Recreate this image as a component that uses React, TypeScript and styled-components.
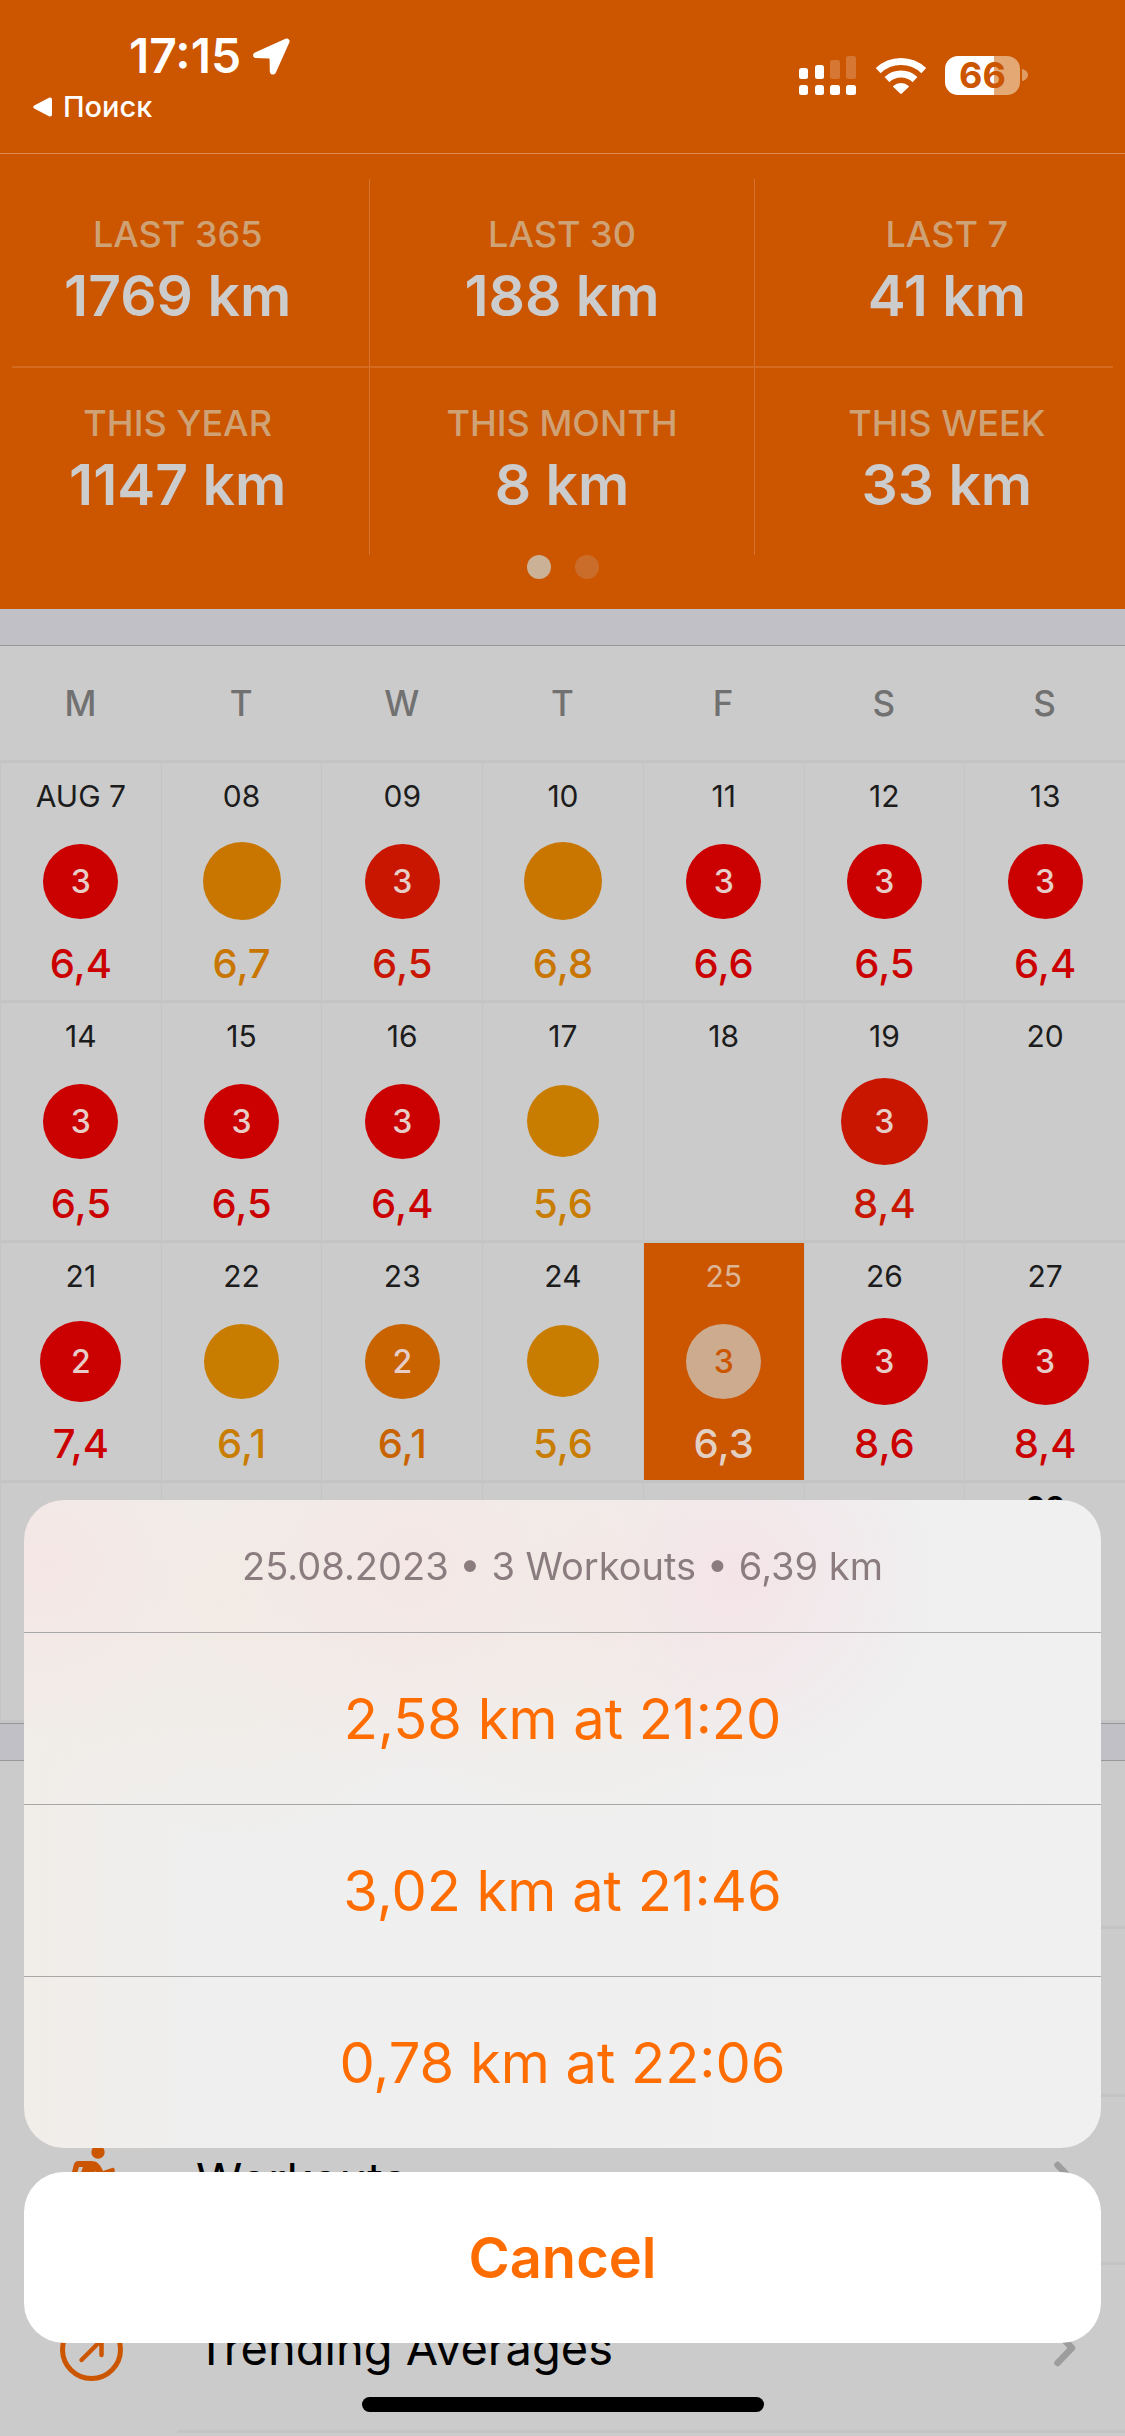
import React from "react";
import styled, { createGlobalStyle } from "styled-components";

const color = {
  orange: "#cc5500",
  accent: "#ff6d00",
  page: "#cbcbcb",
  band: "#c1c0c6",
  bandLine: "#98979c",
  grid: "#c4c4c5",
};

const GlobalStyle = createGlobalStyle`
  * { box-sizing: border-box; }
  body {
    margin: 0;
    background: ${color.page};
    font-family: Inter, "Noto Sans", "Liberation Sans", sans-serif;
  }
  button {
    font: inherit;
    color: inherit;
    border: 0;
    margin: 0;
    padding: 0;
    background: none;
    cursor: pointer;
  }
`;

const Screen = styled.div`
  display: flex;
  flex-direction: column;
  height: 100vh;
  overflow: hidden;
`;

/* ---------- status bar ---------- */

const StatusBar = styled.header`
  display: flex;
  flex: none;
  justify-content: space-between;
  height: 154px;
  padding: 28px 97px 0 33px;
  color: #fff;
  background: ${color.orange};
  border-bottom: 1px solid #dd8a50;
`;

const StatusLeft = styled.div`
  display: flex;
  flex-direction: column;
  gap: 5px;
`;

const Clock = styled.div`
  display: flex;
  align-items: center;
  gap: 12px;
  padding-left: 96px;
  font-size: 48px;
  font-weight: 600;
  line-height: 56px;
`;

const BackLink = styled.a`
  display: flex;
  align-items: center;
  gap: 11px;
  color: inherit;
  font-size: 29px;
  font-weight: 500;
  line-height: 36px;
  text-decoration: none;
`;

const StatusIcons = styled.div`
  display: flex;
  align-items: center;
  gap: 18px;
  height: 94px;
`;

const Battery = styled.div`
  display: flex;
  align-items: center;
  gap: 2px;
`;

const BatteryBody = styled.div`
  width: 75px;
  height: 39px;
  border-radius: 13px;
  background: linear-gradient(90deg, #fff 66%, #e3a873 66%);
  color: ${color.orange};
  font-size: 36px;
  font-weight: 700;
  line-height: 39px;
  text-align: center;
`;

/* ---------- totals ---------- */

const Totals = styled.section`
  flex: none;
  padding: 25px 0 30px;
  overflow: hidden;
  background: ${color.orange};
`;

const TotalsRow = styled.div`
  display: grid;
  grid-template-columns: repeat(3, 1fr);
  margin: 0 -14px;
`;

const TotalsDivider = styled.hr`
  height: 2px;
  margin: 0 12px;
  border: 0;
  background: #d46920;
`;

const Total = styled.div`
  display: flex;
  flex-direction: column;
  gap: 6px;
  height: 187px;
  padding-top: 33px;
  text-align: center;
  border-right: 1px solid #d77334;

  &:last-child {
    border-right: 0;
  }
`;

const TotalLabel = styled.div`
  color: #cfa276;
  font-size: 36px;
  font-weight: 500;
  line-height: 44px;
`;

const TotalValue = styled.div`
  color: #cccccc;
  font-size: 57px;
  font-weight: 600;
  line-height: 68px;
`;

const Pager = styled.div`
  display: flex;
  justify-content: center;
  gap: 24px;
`;

const PagerDot = styled.button<{ $active?: boolean }>`
  width: 24px;
  height: 24px;
  border-radius: 50%;
  background: ${(p) => (p.$active ? "#cbb195" : "#cb6d2a")};
`;

const Band = styled.div`
  flex: none;
  height: 37px;
  background: ${color.band};
  border-bottom: 1px solid ${color.bandLine};
`;

const LowerBand = styled(Band)`
  height: 38px;
  border-top: 1px solid ${color.bandLine};
`;

/* ---------- calendar ---------- */

const Calendar = styled.table`
  flex: none;
  width: 100%;
  table-layout: fixed;
  border-spacing: 0;
  border-bottom: 3px solid ${color.grid};
`;

const Weekday = styled.th`
  height: 114px;
  padding: 0;
  color: #717171;
  font-size: 35px;
  font-weight: 500;
`;

const DayCell = styled.td<{ $selected?: boolean }>`
  height: 240px;
  padding: 0;
  vertical-align: top;
  border-top: 3px solid ${color.grid};
  border-left: 1px solid ${color.grid};
  background: ${(p) => (p.$selected ? color.orange : "transparent")};
  background-clip: padding-box;
`;

const DayButton = styled.button<{ $today?: boolean }>`
  display: flex;
  flex-direction: column;
  align-items: center;
  width: 100%;
  height: 237px;
  padding-top: ${(p) => (p.$today ? 6 : 15)}px;
  font-weight: ${(p) => (p.$today ? 700 : 400)};
`;

const DayDate = styled.span<{ $color: string }>`
  margin-bottom: 22px;
  color: ${(p) => p.$color};
  font-size: 30px;
  line-height: 36px;
`;

const DotArea = styled.span`
  display: flex;
  align-items: center;
  justify-content: center;
  height: 90px;
  margin-bottom: 14px;
`;

const Dot = styled.span<{ $size: number; $fill: string; $text: string }>`
  display: flex;
  align-items: center;
  justify-content: center;
  width: ${(p) => p.$size}px;
  height: ${(p) => p.$size}px;
  border-radius: 50%;
  background: ${(p) => p.$fill};
  color: ${(p) => p.$text};
  font-size: 32px;
  font-weight: 500;
`;

const DayDistance = styled.span<{ $color: string }>`
  color: ${(p) => p.$color};
  font-size: 40px;
  font-weight: 500;
  line-height: 48px;
`;

/* ---------- menu ---------- */

const Menu = styled.nav`
  flex: 1;
`;

const MenuRow = styled.a`
  display: flex;
  align-items: center;
  height: 168px;
  padding-left: 60px;
  color: #000;
  text-decoration: none;
`;

const MenuIcon = styled.span`
  display: flex;
  width: 117px;
`;

const MenuBody = styled.span`
  display: flex;
  flex: 1;
  align-items: center;
  justify-content: space-between;
  height: 168px;
  padding: 0 48px 0 19px;
  border-bottom: 3px solid ${color.grid};
  font-size: 47px;
  font-weight: 400;
`;

/* ---------- action sheet ---------- */

const Overlay = styled.div`
  position: fixed;
  inset: 0;
  display: flex;
  flex-direction: column;
  justify-content: flex-end;
  padding: 0 24px 24px;
`;

const Sheet = styled.div`
  overflow: hidden;
  margin-bottom: 24px;
  border-radius: 40px;
  background:
    radial-gradient(circle at 2% 10%, #f4e6e5 0, #f4e6e500 170px),
    radial-gradient(circle at 36% 10%, #f4e7e5 0, #f4e7e500 220px),
    radial-gradient(circle at 66% 12%, #f4e4e8 0, #f4e4e800 200px),
    radial-gradient(circle at 19% 14%, #f2ebe4 0, #f2ebe400 260px),
    radial-gradient(circle at 51% 14%, #f2ebe5 0, #f2ebe500 240px),
    linear-gradient(90deg, #f1ede9 0, #efefef 16%, #f0f0f0 100%);
`;

const SheetTitle = styled.h2`
  margin: 0;
  color: #8b7d7f;
  font-size: 38px;
  font-weight: 400;
  line-height: 132px;
  text-align: center;
`;

const SheetAction = styled.button`
  display: block;
  width: 100%;
  height: 172px;
  border-top: 1px solid #a8a6a6;
  color: ${color.accent};
  font-size: 56px;
`;

const CancelButton = styled.button`
  flex: none;
  height: 171px;
  margin-bottom: 54px;
  border-radius: 40px;
  background: #fff;
  color: ${color.accent};
  font-size: 56px;
  font-weight: 600;
`;

const HomeIndicator = styled.div`
  align-self: center;
  width: 402px;
  height: 15px;
  border-radius: 8px;
  background: #000;
`;

/* ---------- data ---------- */

const totals = [
  [
    ["LAST 365", "1769 km"],
    ["LAST 30", "188 km"],
    ["LAST 7", "41 km"],
  ],
  [
    ["THIS YEAR", "1147 km"],
    ["THIS MONTH", "8 km"],
    ["THIS WEEK", "33 km"],
  ],
];

const weekdays = ["M", "T", "W", "T", "F", "S", "S"];

const red = "#cb0000";
const vermilion = "#c91600";
const burnt = "#c86300";
const ochre = "#c97600";
const amber = "#c97d00";

type Day = {
  date?: string;
  count?: string;
  size?: number;
  fill?: string;
  km?: string;
  selected?: boolean;
  today?: boolean;
};

const weeks: Day[][] = [
  [
    { date: "AUG 7", count: "3", size: 75, fill: red, km: "6,4" },
    { date: "08", size: 78, fill: ochre, km: "6,7" },
    { date: "09", count: "3", size: 75, fill: vermilion, km: "6,5" },
    { date: "10", size: 78, fill: ochre, km: "6,8" },
    { date: "11", count: "3", size: 75, fill: red, km: "6,6" },
    { date: "12", count: "3", size: 75, fill: red, km: "6,5" },
    { date: "13", count: "3", size: 75, fill: red, km: "6,4" },
  ],
  [
    { date: "14", count: "3", size: 75, fill: red, km: "6,5" },
    { date: "15", count: "3", size: 75, fill: red, km: "6,5" },
    { date: "16", count: "3", size: 75, fill: red, km: "6,4" },
    { date: "17", size: 72, fill: amber, km: "5,6" },
    { date: "18" },
    { date: "19", count: "3", size: 87, fill: vermilion, km: "8,4" },
    { date: "20" },
  ],
  [
    { date: "21", count: "2", size: 81, fill: red, km: "7,4" },
    { date: "22", size: 75, fill: amber, km: "6,1" },
    { date: "23", count: "2", size: 75, fill: burnt, km: "6,1" },
    { date: "24", size: 72, fill: amber, km: "5,6" },
    { date: "25", count: "3", size: 75, fill: "#ccab8f", km: "6,3", selected: true },
    { date: "26", count: "3", size: 87, fill: red, km: "8,6" },
    { date: "27", count: "3", size: 87, fill: red, km: "8,4" },
  ],
  [{}, {}, {}, {}, {}, {}, { date: "03", today: true }],
];

const workouts = ["2,58 km at 21:20", "3,02 km at 21:46", "0,78 km at 22:06"];

/* ---------- icons ---------- */

const LocationArrow = () => (
  <svg width="37" height="37" viewBox="0 0 37 37" fill="#fff" aria-hidden="true">
    <path d="M32.500.8 2 14.400C-1 15.800-.4 20 3 20.100l12.600.3c.6 0 1 .4 1 1l.2 12c.1 3.600 4.600 4.300 6.100 1L36.300 4.600C37.500 2 35 -.3 32.500.8Z" />
  </svg>
);

const BackTriangle = () => (
  <svg width="19" height="20" viewBox="0 0 19 20" fill="#fff" aria-hidden="true">
    <path d="M1.200 8.600 16 .8c1.600-.8 3 .1 3 1.700v15c0 1.600-1.400 2.500-3 1.700L1.200 11.400c-1.300-.7-1.300-2.100 0-2.800Z" />
  </svg>
);

const Signal = () => (
  <svg width="58" height="39" viewBox="0 0 58 39" fill="#fff" aria-hidden="true">
    <rect x="0" y="12" width="9" height="11" rx="2.500" />
    <rect x="16" y="9" width="9" height="14" rx="2.500" />
    <rect x="31" y="4" width="10" height="19" rx="2.500" opacity=".2" />
    <rect x="47" y="0" width="10" height="23" rx="2.500" opacity=".2" />
    <rect x="0" y="29" width="9" height="10" rx="2.500" />
    <rect x="16" y="29" width="9" height="10" rx="2.500" />
    <rect x="31" y="29" width="10" height="10" rx="2.500" />
    <rect x="47" y="29" width="10" height="10" rx="2.500" />
  </svg>
);

const Wifi = () => (
  <svg width="52" height="37" viewBox="0 0 52 37" aria-hidden="true">
    <g fill="none" stroke="#fff" strokeWidth="7">
      <path d="M3.200 13.600a33 33 0 0 1 45.600 0" />
      <path d="M12 22.600a20.500 20.500 0 0 1 28 0" />
    </g>
    <path fill="#fff" d="M18.300 28.900a11.600 11.600 0 0 1 15.400 0c.4.4.4.8 0 1.200l-6.900 6.400c-.5.500-1.100.5-1.600 0l-6.900-6.400c-.4-.4-.4-.8 0-1.200Z" />
  </svg>
);

const BatteryTip = () => (
  <svg width="6" height="12" viewBox="0 0 6 12" fill="#df9b64" aria-hidden="true">
    <path d="M0 0c3.500.8 6 3 6 6s-2.500 5.200-6 6Z" />
  </svg>
);

const Runner = () => (
  <svg width="63" height="70" viewBox="0 0 63 70" aria-hidden="true">
    <circle cx="38" cy="6" r="6.700" fill={color.orange} />
    <path
      fill={color.orange}
      d="M18 15h13c6 0 9 3 12 10l9-3c3-1 4 4 1 5l-13 4-5-6-5 14 10 9-3 17c-1 4-7 3-6-1l2-13-13-9c-3-2-3-4-2-7l5-14h-4l-3 10c-1 3-6 2-5-1l3-12c1-2 2-3 4-3Z"
    />
  </svg>
);

const Trend = () => (
  <svg width="63" height="63" viewBox="0 0 63 63" fill="none" stroke={color.orange} strokeWidth="5" aria-hidden="true">
    <circle cx="31.500" cy="31.500" r="29" />
    <path d="M21.500 42 41 22.500M27 22h14.500v15" strokeWidth="4.500" strokeLinecap="round" strokeLinejoin="round" />
  </svg>
);

const Chevron = () => (
  <svg width="24" height="38" viewBox="0 0 24 38" fill="none" stroke="#9d9d9d" strokeWidth="6.500" strokeLinecap="round" strokeLinejoin="round" aria-hidden="true">
    <path d="M4.500 4 19 19 4.500 34" />
  </svg>
);

/* ---------- app ---------- */

function DayView({ day }: { day: Day }) {
  const dateColor = day.selected ? "#dcb597" : day.today ? "#000" : "#1c1c1c";
  return (
    <DayCell $selected={day.selected}>
      {day.date && (
        <DayButton type="button" $today={day.today}>
          <DayDate $color={dateColor}>{day.date}</DayDate>
          {day.km && day.size && day.fill && (
            <>
              <DotArea>
                <Dot $size={day.size} $fill={day.fill} $text={day.selected ? color.orange : "#e6cdc8"}>
                  {day.count}
                </Dot>
              </DotArea>
              <DayDistance $color={day.selected ? "#e2d0c4" : day.fill}>{day.km}</DayDistance>
            </>
          )}
        </DayButton>
      )}
    </DayCell>
  );
}

export default function App() {
  return (
    <>
      <GlobalStyle />
      <Screen>
        <StatusBar>
          <StatusLeft>
            <Clock>
              17:15
              <LocationArrow />
            </Clock>
            <BackLink href="#">
              <BackTriangle />
              Поиск
            </BackLink>
          </StatusLeft>
          <StatusIcons>
            <Signal />
            <Wifi />
            <Battery>
              <BatteryBody>66</BatteryBody>
              <BatteryTip />
            </Battery>
          </StatusIcons>
        </StatusBar>

        <Totals>
          {totals.map((row, i) => (
            <React.Fragment key={i}>
              {i > 0 && <TotalsDivider />}
              <TotalsRow>
                {row.map(([label, value]) => (
                  <Total key={label}>
                    <TotalLabel>{label}</TotalLabel>
                    <TotalValue>{value}</TotalValue>
                  </Total>
                ))}
              </TotalsRow>
            </React.Fragment>
          ))}
          <Pager>
            <PagerDot type="button" aria-label="Page 1" $active />
            <PagerDot type="button" aria-label="Page 2" />
          </Pager>
        </Totals>
        <Band />

        <Calendar>
          <thead>
            <tr>
              {weekdays.map((name, i) => (
                <Weekday key={i} scope="col">
                  {name}
                </Weekday>
              ))}
            </tr>
          </thead>
          <tbody>
            {weeks.map((week, w) => (
              <tr key={w}>
                {week.map((day, d) => (
                  <DayView key={d} day={day} />
                ))}
              </tr>
            ))}
          </tbody>
        </Calendar>
        <LowerBand />

        <Menu>
          <MenuRow as="div">
            <MenuIcon />
            <MenuBody />
          </MenuRow>
          <MenuRow as="div">
            <MenuIcon />
            <MenuBody />
          </MenuRow>
          <MenuRow href="#">
            <MenuIcon>
              <Runner />
            </MenuIcon>
            <MenuBody>
              Workouts
              <Chevron />
            </MenuBody>
          </MenuRow>
          <MenuRow href="#">
            <MenuIcon>
              <Trend />
            </MenuIcon>
            <MenuBody>
              Trending Averages
              <Chevron />
            </MenuBody>
          </MenuRow>
        </Menu>
      </Screen>

      <Overlay>
        <Sheet role="dialog" aria-labelledby="sheet-title">
          <SheetTitle id="sheet-title">25.08.2023 • 3 Workouts • 6,39 km</SheetTitle>
          {workouts.map((label) => (
            <SheetAction key={label} type="button">
              {label}
            </SheetAction>
          ))}
        </Sheet>
        <CancelButton type="button">Cancel</CancelButton>
        <HomeIndicator />
      </Overlay>
    </>
  );
}
